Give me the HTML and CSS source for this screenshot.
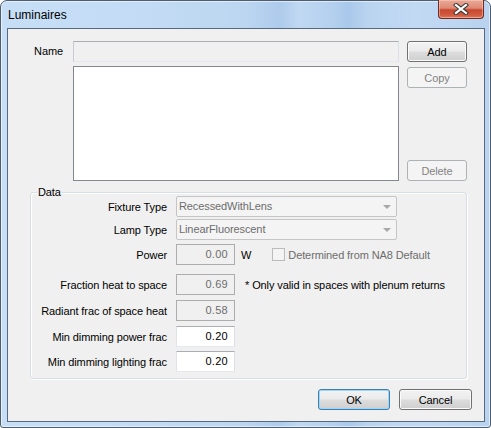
FILE: index.html
```html
<!DOCTYPE html>
<html>
<head>
<meta charset="utf-8">
<title>Luminaires</title>
<link rel="stylesheet" href="styles.css">
</head>
<body>
<div class="window">
  <div class="titlebar">
    <span class="title">Luminaires</span>
    <button class="close" aria-label="Close">
      <svg width="16" height="12" viewBox="0 0 16 12">
        <path d="M3 2 L13 10 M13 2 L3 10" stroke="#3a3a3a" stroke-width="4.2" stroke-linecap="square"/>
        <path d="M3 2 L13 10 M13 2 L3 10" stroke="#ffffff" stroke-width="2.2" stroke-linecap="square"/>
      </svg>
    </button>
  </div>
  <div class="client">
    <div class="top">
      <div class="name-label">Name</div>
      <div class="name-col">
        <div class="name-field"></div>
        <div class="listbox"></div>
      </div>
      <div class="btn-col">
        <button class="btn">Add</button>
        <button class="btn disabled copy">Copy</button>
        <button class="btn disabled delete">Delete</button>
      </div>
    </div>

    <div class="group">
      <span class="legend">Data</span>
      <div class="row r1">
        <span class="label">Fixture Type</span>
        <div class="combo"><span>RecessedWithLens</span><i class="arrow"></i></div>
      </div>
      <div class="row r2">
        <span class="label">Lamp Type</span>
        <div class="combo"><span>LinearFluorescent</span><i class="arrow"></i></div>
      </div>
      <div class="row r3">
        <span class="label">Power</span>
        <div class="num disabled">0.00</div>
        <span class="unit">W</span>
        <span class="check"></span>
        <span class="check-text">Determined from NA8 Default</span>
      </div>
      <div class="row r4">
        <span class="label">Fraction heat to space</span>
        <div class="num disabled">0.69</div>
        <span class="note">* Only valid in spaces with plenum returns</span>
      </div>
      <div class="row r5">
        <span class="label">Radiant frac of space heat</span>
        <div class="num disabled">0.58</div>
      </div>
      <div class="row r6">
        <span class="label">Min dimming power frac</span>
        <div class="num">0.20</div>
      </div>
      <div class="row r7">
        <span class="label">Min dimming lighting frac</span>
        <div class="num">0.20</div>
      </div>
    </div>

    <div class="footer">
      <button class="btn ok">OK</button>
      <button class="btn cancel">Cancel</button>
    </div>
  </div>
</div>
</body>
</html>
```

FILE: styles.css
```css
* { box-sizing: border-box; }

html, body {
  margin: 0;
  padding: 0;
  background: #ffffff;
}

body {
  font-family: "Liberation Sans", Arial, sans-serif;
  font-size: 11px;
  letter-spacing: -0.1px;
  color: #000;
}

/* window frame */
.window {
  position: relative;
  width: 491px;
  height: 428px;
  display: flex;
  flex-direction: column;
  padding: 0 5px 5px 6px;
  border: 1px solid #4d5e70;
  border-radius: 7px 7px 3px 3px;
  background:
    linear-gradient(90deg,
      #c6def6 0%, #c3dbf4 30%, #bcd6f1 50%, #aecbec 57%, #c0d8f2 61%,
      #b4d0ef 68%, #a9c8ea 71%, #bad4f0 75%, #c2d9f3 85%, #b8d2ef 100%);
  box-shadow: inset 0 0 0 1px rgba(255, 255, 255, 0.55);
}

.titlebar {
  height: 27px;
  flex: none;
}

.title {
  display: block;
  padding: 7px 0 0 1px;
  font-size: 12px;
  line-height: 14px;
  letter-spacing: 0;
  color: #000;
}

.close {
  position: absolute;
  top: -1px;
  right: 6px;
  width: 46px;
  height: 19px;
  padding: 0;
  border: 1px solid #6e2c22;
  border-top: none;
  border-radius: 0 0 4px 4px;
  background: linear-gradient(#e9a996 0%, #dd8a74 45%, #c8472f 55%, #d25c3f 85%, #e27b5b 100%);
  box-shadow: inset 0 0 0 1px rgba(255, 220, 210, 0.45);
  display: flex;
  align-items: center;
  justify-content: center;
}

/* dialog client area */
.client {
  flex: 1;
  display: flex;
  flex-direction: column;
  border: 1px solid #56697d;
  background: #f0f0f0;
}

.top {
  display: flex;
  padding-top: 12px;
}

.name-label {
  width: 55px;
  margin-right: 10px;
  text-align: right;
  line-height: 21px;
}

.name-col {
  width: 326px;
  display: flex;
  flex-direction: column;
}

.name-field {
  height: 21px;
  border: 1px solid;
  border-color: #abadb3 #dbdfe6 #e3e9ef #c8cbd1;
  background: #f0f0f0;
}

.listbox {
  height: 115px;
  margin-top: 4px;
  border: 1px solid #828790;
  background: #ffffff;
}

.btn-col {
  width: 60px;
  margin-left: 8px;
  display: flex;
  flex-direction: column;
}

.btn {
  height: 21px;
  padding: 0;
  font-family: "Liberation Sans", Arial, sans-serif;
  font-size: 11px;
  letter-spacing: -0.1px;
  color: #000;
  border: 1px solid #707070;
  border-radius: 3px;
  background: linear-gradient(#f2f2f2 0%, #ebebeb 48%, #dddddd 52%, #cfcfcf 100%);
  box-shadow: inset 0 0 0 1px #fbfbfb;
}

.btn.disabled {
  color: #838383;
  border-color: #adb2b5;
  background: #f4f4f4;
  box-shadow: none;
}

.copy { margin-top: 5px; }
.delete { margin-top: auto; }

/* Data group */
.group {
  position: relative;
  margin: 11px 17px 0 22px;
  padding: 3px 0 6px 0;
  border: 1px solid #d5dfe5;
  border-radius: 3px;
  box-shadow: inset 1px 1px 0 #ffffff, 1px 1px 0 #ffffff;
}

.legend {
  position: absolute;
  top: -7px;
  left: 6px;
  padding: 0 1px;
  line-height: 13px;
  background: #f0f0f0;
}

.row {
  display: flex;
  align-items: center;
  height: 21px;
}

.r2 { margin-top: 2px; }
.r3 { margin-top: 4px; }
.r4 { margin-top: 9px; }
.r5 { margin-top: 5px; }
.r6 { margin-top: 5px; }
.r7 { margin-top: 4px; }

.label {
  width: 136px;
  margin-right: 9px;
  text-align: right;
  white-space: nowrap;
}

.combo {
  position: relative;
  width: 221px;
  height: 21px;
  padding-left: 2px;
  line-height: 19px;
  color: #6d6d6d;
  border: 1px solid #c5c5c5;
  border-radius: 2px;
  background: #f4f4f4;
}

.arrow {
  position: absolute;
  right: 5px;
  top: 8px;
  width: 0;
  height: 0;
  border-left: 4px solid transparent;
  border-right: 4px solid transparent;
  border-top: 4px solid #a8a8a8;
}

.num {
  width: 59px;
  height: 21px;
  padding-right: 6px;
  text-align: right;
  line-height: 19px;
  letter-spacing: 0.3px;
  border: 1px solid;
  border-color: #abadb3 #dbdfe6 #e3e9ef #e2e3ea;
  background: #ffffff;
}

.num.disabled {
  color: #6d6d6d;
  border-color: #adadad;
  background: #f0f0f0;
}

.unit {
  margin-left: 6px;
}

.check {
  width: 13px;
  height: 13px;
  margin-left: 21px;
  border: 1px solid #bcbcbc;
  background: #f4f4f4;
}

.check-text {
  margin-left: 3px;
  color: #6d6d6d;
  white-space: nowrap;
}

.note {
  margin-left: 10px;
  white-space: nowrap;
}

/* dialog buttons */
.footer {
  display: flex;
  justify-content: flex-end;
  gap: 9px;
  margin-top: 10px;
  padding-right: 12px;
}

.ok { width: 72px; }
.cancel { width: 73px; }

.ok {
  border-color: #3c7fb1;
  box-shadow: inset 0 0 0 1px #9fd6f7;
}
```
